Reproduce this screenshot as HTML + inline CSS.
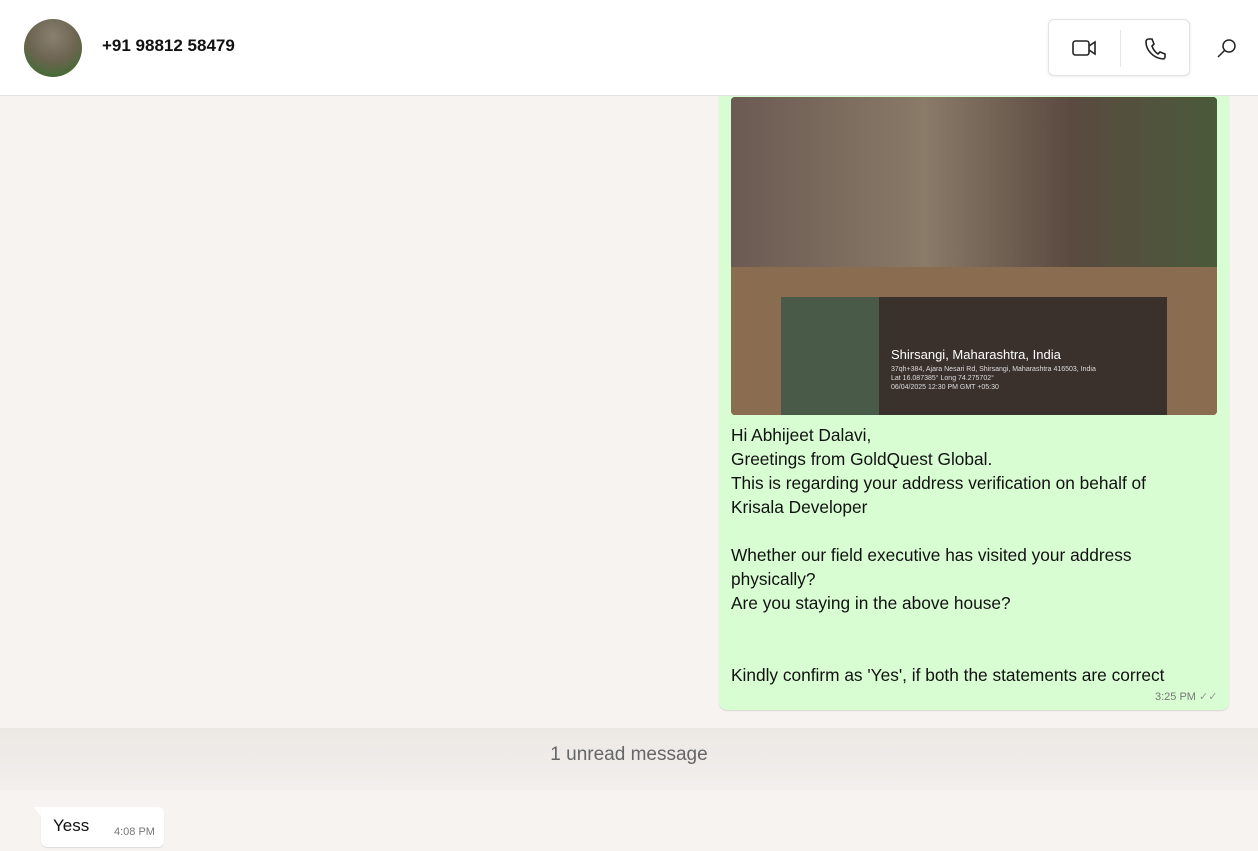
<!DOCTYPE html>
<html><head><meta charset="utf-8"><style>
*{margin:0;padding:0;box-sizing:border-box}
body{width:1258px;height:851px;overflow:hidden;background:#f6f3f0;font-family:"Liberation Sans",sans-serif;position:relative}
.hdr{position:absolute;left:0;top:0;width:1258px;height:96px;background:#fff;border-bottom:1px solid #e4e1de;z-index:5}
.av{position:absolute;left:24px;top:19px;width:58px;height:58px;border-radius:50%;background:radial-gradient(circle at 50% 30%,#8a8070,#6b6450 50%,#4d6a3a 75%,#3d5a2e)}
.name{position:absolute;left:102px;top:36px;font-size:17px;color:#111;font-weight:600}
.btns{position:absolute;left:1048px;top:19px;width:142px;height:57px;border:1px solid #e2e2e2;border-radius:6px;box-shadow:0 1px 3px rgba(0,0,0,.08);background:#fff}
.sep{position:absolute;left:71px;top:10px;width:1px;height:37px;background:#e6e6e6}
.bub{position:absolute;left:719px;top:90px;width:510px;height:620px;background:#d9fdd3;border-radius:8px;box-shadow:0 1px 1px rgba(0,0,0,.12)}
.img{position:absolute;left:731px;top:97px;width:486px;height:318px;border-radius:4px;overflow:hidden;background:linear-gradient(180deg,#5a5148 0%,#6e5f52 30%,#8a7360 60%,#7a6048 100%)}
.txt{position:absolute;left:731px;top:423px;font-size:17.3px;line-height:24px;color:#111}
.time{position:absolute;font-size:11px;color:#777}
.band{position:absolute;left:0;top:728px;width:1258px;height:62px;background:linear-gradient(180deg,#ece8e4,#f2efec)}
.unread{position:absolute;left:0;top:744px;width:1258px;text-align:center;font-size:19px;color:#666}
.yb{position:absolute;left:41px;top:807px;width:123px;height:40px;background:#fff;border-radius:0 6px 6px 6px;box-shadow:0 1px 1px rgba(0,0,0,.1)}
</style></head><body>
<div class="hdr">
<div class="av"></div>
<div class="name">+91 98812 58479</div>
<div class="btns">
<svg style="position:absolute;left:22px;top:17px" width="28" height="22" viewBox="0 0 28 22" fill="none" stroke="#222" stroke-width="1.6"><rect x="2" y="4" width="16" height="14" rx="2.5"/><path d="M18 9l6-4v12l-6-4"/></svg>
<div class="sep"></div>
<svg style="position:absolute;left:94px;top:16px" width="24" height="26" viewBox="0 0 24 26" fill="none" stroke="#222" stroke-width="1.6"><path d="M6 3l3 0 2 5-2 2c1 3 3 6 6 8l2-2 5 2v3c0 1-1 2-2 2C10 22 3 14 3 6c0-2 1-3 3-3z"/></svg>
</div>
<svg style="position:absolute;left:1216px;top:37px" width="24" height="24" viewBox="0 0 24 24" fill="none" stroke="#222" stroke-width="1.5"><circle cx="13" cy="9" r="6"/><path d="M8.5 13.5L2 20"/></svg>
</div>
<div class="bub"></div>
<div class="img">
<div style="position:absolute;left:0;top:0;width:100%;height:60%;background:linear-gradient(90deg,#6a5a52,#8a7a68 40%,#5a4a40 70%,#4a5a3a)"></div>
<div style="position:absolute;left:0;top:170px;width:100%;height:150px;background:#8a6c50"></div>
<div style="position:absolute;left:50px;top:200px;width:98px;height:118px;background:#4a5a48"></div>
<div style="position:absolute;left:148px;top:200px;width:288px;height:118px;background:#3a302c"></div>
<div style="position:absolute;left:160px;top:250px;color:#fff;font-size:13px">Shirsangi, Maharashtra, India</div>
<div style="position:absolute;left:160px;top:268px;color:#ddd;font-size:7px;line-height:9px">37qh+384, Ajara Nesari Rd, Shirsangi, Maharashtra 416503, India<br>Lat 16.087385° Long 74.275702°<br>06/04/2025 12:30 PM GMT +05:30</div>
</div>
<div class="txt">Hi Abhijeet Dalavi,<br>Greetings from GoldQuest Global.<br>This is regarding your address verification on behalf of<br>Krisala Developer<br><br>Whether our field executive has visited your address<br>physically?<br>Are you staying in the above house?<br><br><br>Kindly confirm as 'Yes', if both the statements are correct</div>
<div class="time" style="left:1155px;top:690px">3:25 PM <span style="color:#999">✓✓</span></div>
<div class="band"></div>
<div class="unread">1 unread message</div>
<div style="position:absolute;left:33px;top:807px;width:0;height:0;border-top:10px solid #fff;border-left:9px solid transparent"></div>
<div class="yb"><span style="position:absolute;left:12px;top:9px;font-size:17px;color:#111">Yess</span><span class="time" style="left:73px;top:19px">4:08 PM</span></div>
</body></html>
